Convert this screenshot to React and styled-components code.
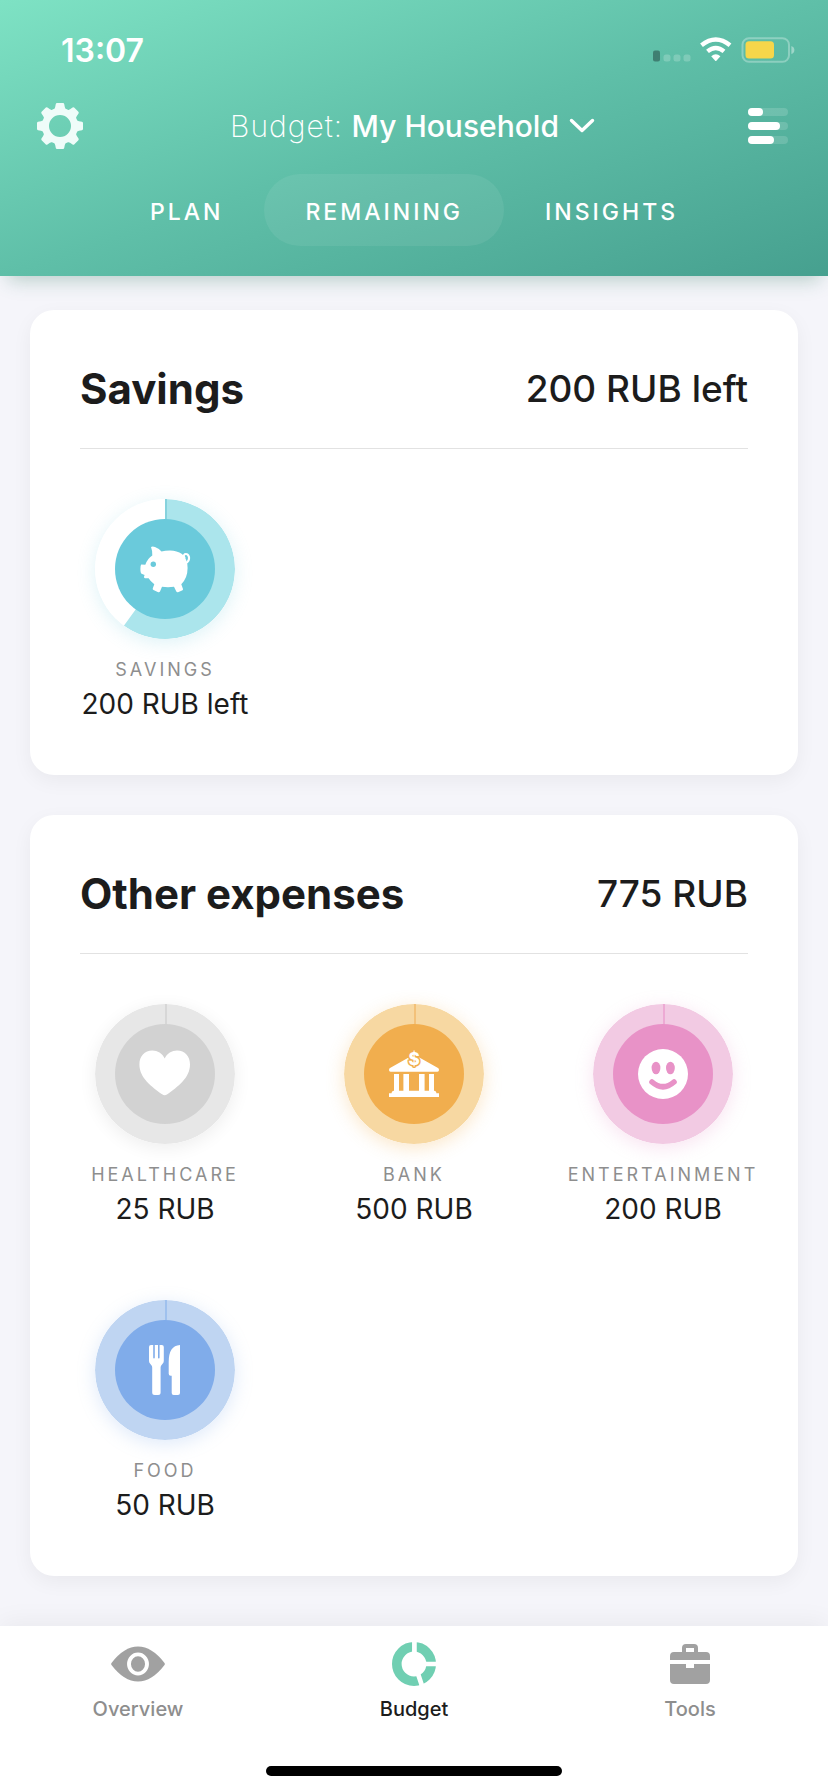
import React, { useState } from 'react';
import styled, { createGlobalStyle } from 'styled-components';

const TABS = ['Plan', 'Remaining', 'Insights'];

const TEAL = { ring: '#abe5ec', core: '#6acadb', mark: '#86d2dd', glow: 'rgba(106, 202, 219, 0.22)' };
const GREY = { ring: '#e7e7e7', core: '#d2d2d2', mark: '#d7d7d7', glow: 'rgba(0, 0, 0, 0.07)' };
const ORANGE = { ring: '#f7d8a2', core: '#f1ae4e', mark: '#f3c179', glow: 'rgba(241, 174, 78, 0.3)' };
const PINK = { ring: '#f2cae3', core: '#e892c7', mark: '#edaad4', glow: 'rgba(232, 146, 199, 0.25)' };
const BLUE = { ring: '#bfd5f2', core: '#80acea', mark: '#9fc1ee', glow: 'rgba(128, 172, 234, 0.25)' };

const groups = [
    {
        title: 'Savings',
        total: '200 RUB left',
        items: [{ name: 'Savings', value: '200 RUB left', left: 0.6, icon: 'pig', colors: TEAL }],
    },
    {
        title: 'Other expenses',
        total: '775 RUB',
        items: [
            { name: 'Healthcare', value: '25 RUB', left: 1, icon: 'heart', colors: GREY },
            { name: 'Bank', value: '500 RUB', left: 1, icon: 'bank', colors: ORANGE },
            { name: 'Entertainment', value: '200 RUB', left: 1, icon: 'smile', colors: PINK },
            { name: 'Food', value: '50 RUB', left: 1, icon: 'food', colors: BLUE },
        ],
    },
];

// Glyphs share the 140x140 space of the ring they sit in
const glyphs = {
    pig: core => (
        <>
            <path
                fill="#fff"
                d="M56 48 Q57.5 47 60 48 Q64.5 49.5 66.5 52.6 Q70 51.4 75 51.4 Q82 51.4 87 55 Q92.600 60 92.600 69 Q92.600 79 86.3 85.2 L88 90 Q88.2 91 87 91.5 L83 93.2 Q81.8 93.5 81.2 92.3 L79 87.8 Q73 88.6 67 87.8 L65 92.5 Q64.4 93.6 63.2 93.2 L58.5 91 Q57.3 90.4 57.8 89.3 L59.3 85.2 Q55.5 82.5 53.6 79.3 L50 79.2 Q48.8 79 49 77.8 L49.6 76 L46.6 74.8 Q45.4 74 45.4 70 Q45.4 66.5 46.2 65.6 L50.3 65.8 Q52.5 59.5 57.3 56.5 Q57.6 52 56 48Z"
            />
            <path d="M91 64 Q94.500 62 94 58 Q92.800 54.200 89.800 55.200 Q87.800 57 89.400 58.600" fill="none" stroke="#fff" strokeWidth="2.200" strokeLinecap="round" />
            <circle cx="58.3" cy="65.3" r="2.7" fill={core} />
        </>
    ),
    heart: () => (
        <path
            fill="#fff"
            d="M69.7 54.5 C72 49.5 77 46.6 82 46.6 C90 46.6 95 52.5 95 60.5 C95 74 82.5 83 72.3 90.3 Q69.7 92 67.1 90.3 C57 83 44.4 74 44.4 60.5 C44.4 52.5 49.5 46.6 57.4 46.6 C62.4 46.6 67.4 49.5 69.7 54.5Z"
        />
    ),
    bank: core => (
        <>
            <path
                fill="#fff"
                d="M70 50.5 L94 64 Q95 64.6 95 66 Q95 67.7 93.4 67.7 H46.6 Q45 67.7 45 66 Q45 64.6 46 64Z M50 70 h5 v16.7 h4.4 V70 h5.6 v16.7 H75 V70 h5.6 v16.7 H85 V70 h5 v16.7 q2.4 0 2.4 2.6 H95 V93 H45 V89.3 h2.6 q0 -2.6 2.4 -2.6Z"
            />
            <text x="70" y="60.5" textAnchor="middle" fontFamily="Inter, sans-serif" fontWeight="800" fontSize="17" fill="#fff" stroke={core} strokeWidth="3" strokeLinejoin="round" paintOrder="stroke">
                $
            </text>
        </>
    ),
    smile: core => (
        <>
            <circle cx="70" cy="70" r="25" fill="#fff" />
            <ellipse cx="63" cy="64" rx="4.4" ry="6.3" fill={core} />
            <ellipse cx="77.4" cy="64" rx="4.4" ry="6.3" fill={core} />
            <path d="M59 78 Q70 87.5 81 78" fill="none" stroke={core} strokeWidth="5.6" strokeLinecap="round" />
        </>
    ),
    food: () => (
        <path
            fill="#fff"
            d="M56 45 h2.2 v12.6 q0 1 0.8 1 t0.8 -1 V45 h3.2 v12.6 q0 1 0.8 1 t0.8 -1 V45 h2.2 q2 0 2 2 v14 q0 1.6 -1.2 2.8 l-1.4 1.6 q-0.6 0.8 -0.6 2 V92.5 q0 2.5 -2.5 2.5 h-3.4 q-2.5 0 -2.5 -2.5 V67.4 q0 -1.2 -0.6 -2 l-1.4 -1.6 Q54 62.6 54 61 V47 q0 -2 2 -2Z M85 45 V93 q0 2 -2 2 h-4.3 q-2 0 -2 -2 V75.7 h-1 q-2 0 -2 -2 V62 Q73.7 45.5 85 45Z"
        />
    ),
};

const sectorPath = share => {
    const angle = share * 2 * Math.PI;
    const x = 70 + 70 * Math.sin(angle);
    const y = 70 - 70 * Math.cos(angle);
    return `M70 70 V0 A70 70 0 ${share > 0.5 ? 1 : 0} 1 ${x} ${y}Z`;
};

const CategoryRing = ({ left, icon, colors }) => (
    <Ring viewBox="0 0 140 140" $glow={colors.glow} aria-hidden="true">
        <circle cx="70" cy="70" r="70" fill={left < 1 ? '#fff' : colors.ring} />
        {left < 1 && <path d={sectorPath(left)} fill={colors.ring} />}
        <rect x="70" y="0" width="2" height="22" fill={colors.mark} />
        <circle cx="70" cy="70" r="50" fill={colors.core} />
        {glyphs[icon](colors.core)}
    </Ring>
);

const GearIcon = () => (
    <svg width="46" height="46" viewBox="-23 -23 46 46" aria-hidden="true">
        <circle r="14.5" fill="none" stroke="#effcf9" strokeWidth="7" />
        {[0, 45, 90, 135, 180, 225, 270, 315].map(deg => (
            <path key={deg} transform={`rotate(${deg})`} d="M-7 -15.5 Q-5.2 -17 -4.8 -19 L-4.2 -22 Q-4 -23 -3 -23 H3 Q4 -23 4.2 -22 L4.8 -19 Q5.2 -17 7 -15.5Z" fill="#effcf9" />
        ))}
    </svg>
);

const ChevronIcon = () => (
    <svg width="26" height="16" viewBox="0 0 26 16" aria-hidden="true">
        <path d="M2.5 2.5 L13 12.5 L23.5 2.5" fill="none" stroke="#fff" strokeWidth="3.4" strokeLinecap="round" strokeLinejoin="round" />
    </svg>
);

const BarsIcon = () => (
    <svg width="40" height="36" viewBox="0 0 40 36" aria-hidden="true">
        {[15, 32, 26].map((width, i) => (
            <g key={width} fill="#fff">
                <rect y={i * 14} width="40" height="8" rx="4" opacity="0.15" />
                <rect y={i * 14} width={width} height="8" rx="4" />
            </g>
        ))}
    </svg>
);

const StatusIcons = () => (
    <svg width="142" height="26" viewBox="0 0 142 26" aria-hidden="true">
        <rect x="0" y="13.5" width="7" height="11" rx="2" fill="#3f7f72" />
        <g fill="#fff" opacity="0.2">
            <rect x="10.5" y="17.5" width="7" height="7" rx="2.5" />
            <rect x="20.5" y="17.5" width="7" height="7" rx="2.5" />
            <rect x="30.5" y="17.5" width="7" height="7" rx="2.5" />
        </g>
        <g fill="none" stroke="#fff" strokeWidth="4.4">
            <path d="M48.5 8.3 Q62.8 -3.2 77 8.3" />
            <path d="M54.5 14.4 Q62.8 7.6 71 14.4" />
        </g>
        <path d="M58.2 19.2 Q62.8 15.4 67.4 19.2 L63.4 23.8 Q62.8 24.4 62.2 23.8Z" fill="#fff" />
        <rect x="89.5" y="1.2" width="46.5" height="23.6" rx="6.5" fill="none" stroke="#fff" strokeOpacity="0.3" strokeWidth="2" />
        <rect x="92.5" y="4.2" width="28.5" height="17.4" rx="3.5" fill="#f6d64a" />
        <path d="M138.4 9 Q141.4 10 141.4 13 Q141.4 16 138.4 17Z" fill="#fff" opacity="0.4" />
    </svg>
);

const EyeIcon = () => (
    <svg width="54" height="36" viewBox="0 0 54 36" aria-hidden="true">
        <path d="M0.5 19 Q-0.2 18 0.5 17 Q13 0.5 27 0.5 T53.5 17 Q54.2 18 53.5 19 Q41 35.5 27 35.5 T0.5 19Z" fill="#a1a1a1" />
        <ellipse cx="27" cy="18" rx="9" ry="9.6" fill="none" stroke="#fff" strokeWidth="3.9" />
    </svg>
);

const DonutIcon = () => (
    <svg width="44" height="44" viewBox="0 0 44 44" aria-hidden="true">
        <circle cx="22" cy="22" r="17.2" fill="none" stroke="#70cfb2" strokeWidth="9.6" />
        <path d="M22.4 -1 V14 M32 22 H45 M25.4 30 L30.4 45" stroke="#fff" strokeWidth="4.7" />
    </svg>
);

const BriefcaseIcon = () => (
    <svg width="40" height="40" viewBox="0 0 40 40" fill="#a1a1a1" aria-hidden="true">
        <path d="M12 8 V4 Q12 0 16 0 H24 Q28 0 28 4 V8 H36 Q40 8 40 12 V16 H0 V12 Q0 8 4 8Z M16 4 V8 H24 V4Z" fillRule="evenodd" />
        <path d="M0 20 H16 V24 H24 V20 H40 V36 Q40 40 36 40 H4 Q0 40 0 36Z" />
    </svg>
);

const navItems = [
    { label: 'Overview', Icon: EyeIcon },
    { label: 'Budget', Icon: DonutIcon },
    { label: 'Tools', Icon: BriefcaseIcon },
];

const App = () => {
    const [tab, setTab] = useState('Remaining');
    const [page, setPage] = useState('Budget');

    return (
        <Page>
            <GlobalStyle />
            <Header>
                <StatusBar>
                    <Clock>13:07</Clock>
                    <StatusIcons />
                </StatusBar>
                <TitleRow>
                    <IconButton aria-label="Settings">
                        <GearIcon />
                    </IconButton>
                    <BudgetPicker>
                        <span><PickerLabel>Budget:</PickerLabel> <strong>My Household</strong></span>
                        <ChevronIcon />
                    </BudgetPicker>
                    <IconButton aria-label="Categories">
                        <BarsIcon />
                    </IconButton>
                </TitleRow>
                <Tabs>
                    {TABS.map(name => (
                        <Tab key={name} $active={name === tab} onClick={() => setTab(name)}>
                            {name}
                        </Tab>
                    ))}
                </Tabs>
            </Header>
            <Content>
                {groups.map(group => (
                    <Card key={group.title}>
                        <CardHeader>
                            <CardTitle>{group.title}</CardTitle>
                            <CardTotal>{group.total}</CardTotal>
                        </CardHeader>
                        <CategoryGrid>
                            {group.items.map(item => (
                                <Category key={item.name}>
                                    <CategoryRing left={item.left} icon={item.icon} colors={item.colors} />
                                    <CategoryName>{item.name}</CategoryName>
                                    <CategoryValue>{item.value}</CategoryValue>
                                </Category>
                            ))}
                        </CategoryGrid>
                    </Card>
                ))}
            </Content>
            <BottomBar>
                <Nav>
                    {navItems.map(({ label, Icon }) => (
                        <NavLink key={label} href={`#${label.toLowerCase()}`} $active={label === page} onClick={() => setPage(label)}>
                            <NavIcon>
                                <Icon />
                            </NavIcon>
                            {label}
                        </NavLink>
                    ))}
                </Nav>
                <HomeIndicator />
            </BottomBar>
        </Page>
    );
};

const GlobalStyle = createGlobalStyle`
    * {
        box-sizing: border-box;
    }
    body {
        margin: 0;
        background: #f5f5fa;
        font-family: Inter, "Liberation Sans", sans-serif;
        color: #1c1c1c;
    }
    button {
        border: none;
        padding: 0;
        background: none;
        font: inherit;
        color: inherit;
        cursor: pointer;
    }
    svg {
        display: block;
        flex-shrink: 0;
    }
`;

const Page = styled.div`
    min-height: 100vh;
    display: flex;
    flex-direction: column;
`;

const Header = styled.header`
    padding-bottom: 30px;
    background: linear-gradient(to bottom right, #7ee2c4, #5fbfa8 50%, #46a08f);
    box-shadow: 0 12px 18px -8px rgba(50, 120, 95, 0.32);
    color: #fff;
`;

const StatusBar = styled.div`
    display: flex;
    align-items: center;
    justify-content: space-between;
    height: 88px;
    padding: 12px 33px 0 61px;
`;

const Clock = styled.time`
    font-size: 32px;
    font-weight: 600;
`;

const TitleRow = styled.div`
    display: grid;
    grid-template-columns: 1fr auto 1fr;
    align-items: center;
    height: 76px;
    padding: 0 40px 0 37px;
`;

const IconButton = styled.button`
    justify-self: start;

    &:last-child {
        justify-self: end;
    }
`;

const BudgetPicker = styled.button`
    display: flex;
    align-items: center;
    gap: 10px;
    font-size: 30px;

    strong {
        font-weight: 500;
    }
`;

const PickerLabel = styled.span`
    font-weight: 200;
    letter-spacing: 1px;
`;

const Tabs = styled.nav`
    display: flex;
    justify-content: center;
    margin-top: 10px;
`;

const Tab = styled.button`
    height: 72px;
    padding: 4px 41px 0;
    border-radius: 36px;
    background: ${({ $active }) => ($active ? 'rgba(255, 255, 255, 0.07)' : 'none')};
    font-size: 23px;
    font-weight: 500;
    letter-spacing: 3px;
    text-transform: uppercase;
`;

const Content = styled.main`
    flex: 1;
    display: flex;
    flex-direction: column;
    gap: 40px;
    padding: 34px 30px 50px;
`;

const Card = styled.section`
    padding: 50px;
    border-radius: 24px;
    background: #fff;
    box-shadow: 0 6px 20px rgba(0, 0, 20, 0.05);
`;

const CardHeader = styled.div`
    display: flex;
    align-items: center;
    justify-content: space-between;
    padding: 2px 0 32px;
    border-bottom: 1px solid #e2e2e2;
    line-height: 54px;
`;

const CardTitle = styled.h2`
    margin: 0;
    font-size: 42px;
    font-weight: 700;
`;

const CardTotal = styled.span`
    font-size: 37px;
    font-weight: 500;
`;

const CategoryGrid = styled.div`
    display: grid;
    grid-template-columns: repeat(3, 170px);
    justify-content: space-between;
    row-gap: 70px;
    padding-top: 50px;
`;

const Category = styled.div`
    display: flex;
    flex-direction: column;
    align-items: center;
    white-space: nowrap;
`;

const Ring = styled.svg`
    width: 140px;
    height: 140px;
    margin-bottom: 18px;
    border-radius: 50%;
    box-shadow: 0 4px 18px ${({ $glow }) => $glow};
`;

const CategoryName = styled.span`
    font-size: 18px;
    line-height: 26px;
    letter-spacing: 3px;
    text-transform: uppercase;
    color: #8e8e8e;
`;

const CategoryValue = styled.span`
    font-size: 28px;
    line-height: 42px;
`;

const BottomBar = styled.footer`
    display: flex;
    flex-direction: column;
    align-items: center;
    padding-bottom: 16px;
    background: #fff;
    box-shadow: 0 -4px 24px rgba(0, 0, 20, 0.05);
`;

const Nav = styled.nav`
    align-self: stretch;
    display: grid;
    grid-template-columns: repeat(3, 1fr);
    height: 140px;
    padding-top: 14px;
`;

const NavLink = styled.a`
    display: flex;
    flex-direction: column;
    align-items: center;
    gap: 8px;
    font-size: 20px;
    line-height: 26px;
    font-weight: 500;
    text-decoration: none;
    color: ${({ $active }) => ($active ? '#1c1c1c' : '#8e8e8e')};
`;

const NavIcon = styled.span`
    display: flex;
    align-items: center;
    height: 48px;
`;

const HomeIndicator = styled.div`
    width: 296px;
    height: 10px;
    border-radius: 5px;
    background: #000;
`;

export default App;
